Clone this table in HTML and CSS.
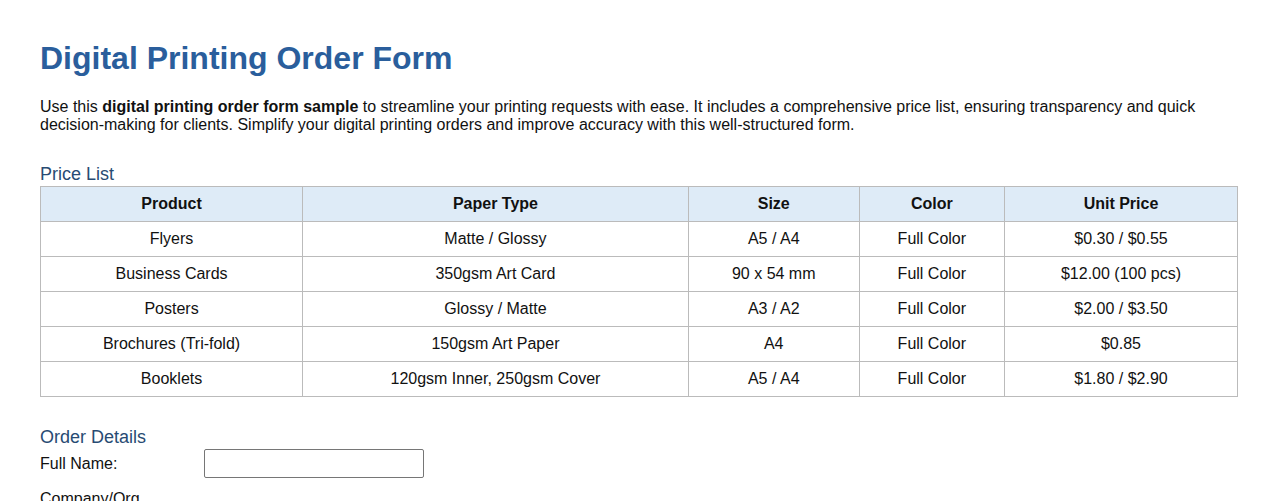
FILE: index.html
```html
<!DOCTYPE html>
<html>
<head>
<meta charset="utf-8">
<link rel="stylesheet" href="styles.css">
</head>
<body>
<div class="page">
  <h1 class="title">Digital Printing Order Form</h1>
  <p class="intro">Use this <strong>digital printing order form sample</strong> to streamline your printing requests with ease. It includes a comprehensive price list, ensuring transparency and quick decision-making for clients. Simplify your digital printing orders and improve accuracy with this well-structured form.</p>

  <h2 class="section">Price List</h2>
  <table class="prices">
    <thead>
      <tr><th>Product</th><th>Paper Type</th><th>Size</th><th>Color</th><th>Unit Price</th></tr>
    </thead>
    <tbody>
      <tr><td>Flyers</td><td>Matte / Glossy</td><td>A5 / A4</td><td>Full Color</td><td>$0.30 / $0.55</td></tr>
      <tr><td>Business Cards</td><td>350gsm Art Card</td><td>90 x 54 mm</td><td>Full Color</td><td>$12.00 (100 pcs)</td></tr>
      <tr><td>Posters</td><td>Glossy / Matte</td><td>A3 / A2</td><td>Full Color</td><td>$2.00 / $3.50</td></tr>
      <tr><td>Brochures (Tri-fold)</td><td>150gsm Art Paper</td><td>A4</td><td>Full Color</td><td>$0.85</td></tr>
      <tr><td>Booklets</td><td>120gsm Inner, 250gsm Cover</td><td>A5 / A4</td><td>Full Color</td><td>$1.80 / $2.90</td></tr>
    </tbody>
  </table>

  <h2 class="section section-order">Order Details</h2>
  <div class="field"><label class="label">Full Name:</label><input class="input" type="text"></div>
  <div class="field"><label class="label">Company/Org. (optional):</label><input class="input" type="text"></div>
</div>
</body>
</html>
```

FILE: styles.css
```css
html, body {
  margin: 0;
  padding: 0;
  background: #ffffff;
}
body {
  font-family: "Liberation Sans", Arial, sans-serif;
  font-size: 16px;
  color: #111;
}
.page {
  padding: 40px 40px 20px;
}
.title {
  font-size: 32px;
  font-weight: bold;
  color: #2a5e9c;
  margin: 0 0 21px;
}
.intro {
  margin: 0 0 30px;
  line-height: 18px;
}
.section {
  font-size: 18px;
  font-weight: normal;
  color: #284b73;
  margin: 0 0 1px;
}
.section-order {
  margin-top: 30px;
  margin-bottom: 1px;
}
.prices {
  width: 100%;
  border-collapse: collapse;
}
.prices th, .prices td {
  border: 1px solid #bbbbbb;
  padding: 8px;
  text-align: center;
  font-size: 16px;
}
.prices th {
  background: #deebf7;
  font-weight: bold;
}
.field {
  margin-bottom: 12px;
}
.label {
  display: inline-block;
  width: 164px;
  line-height: 18px;
}
.input {
  width: 220px;
  height: 29px;
  box-sizing: border-box;
  border: 1px solid #767676;
  border-radius: 2px;
  padding: 2px 4px;
  font-size: 16px;
  font-family: inherit;
}
```
